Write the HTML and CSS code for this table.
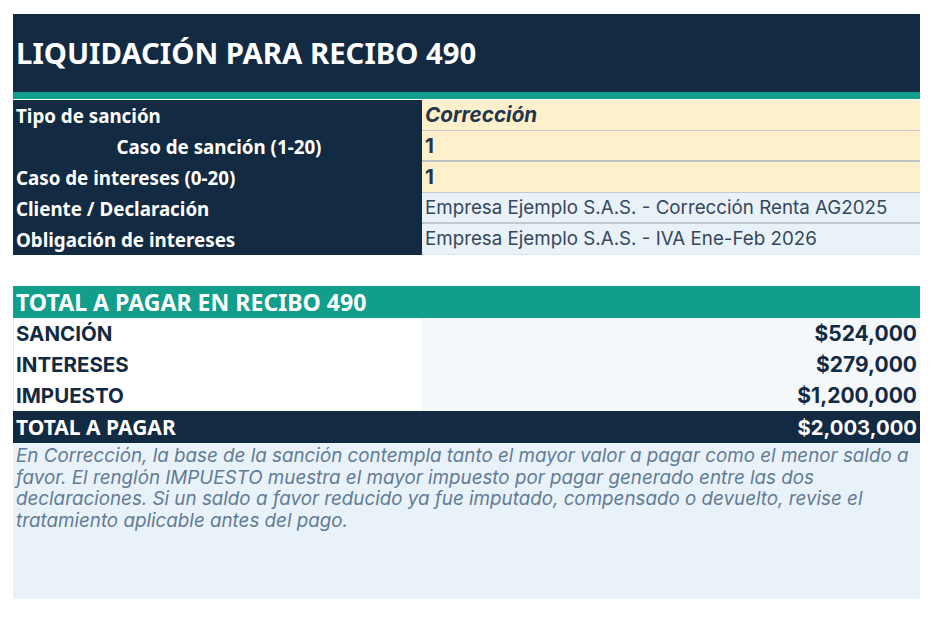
FILE: index.html
```html
<!DOCTYPE html>
<html lang="es">
<head>
<meta charset="utf-8">
<title>Liquidación para recibo 490</title>
<link rel="stylesheet" href="styles.css">
</head>
<body>
<div class="sheet">
  <header class="title">LIQUIDACIÓN PARA RECIBO 490</header>
  <div class="params">
    <div class="lbl">Tipo de sanción</div>
    <div class="val input italic">Corrección</div>
    <div class="lbl center">Caso de sanción (1-20)</div>
    <div class="val input b2">1</div>
    <div class="lbl">Caso de intereses (0-20)</div>
    <div class="val input">1</div>
    <div class="lbl">Cliente / Declaración</div>
    <div class="val info b2">Empresa Ejemplo S.A.S. - Corrección Renta AG2025</div>
    <div class="lbl">Obligación de intereses</div>
    <div class="val info">Empresa Ejemplo S.A.S. - IVA Ene-Feb 2026</div>
  </div>

  <section class="totals">
    <div class="sec-head">TOTAL A PAGAR EN RECIBO 490</div>
    <div class="trow"><div class="tl">SANCIÓN</div><div class="tv">$524,000</div></div>
    <div class="trow"><div class="tl">INTERESES</div><div class="tv">$279,000</div></div>
    <div class="trow"><div class="tl">IMPUESTO</div><div class="tv">$1,200,000</div></div>
    <div class="grand"><div class="gl">TOTAL A PAGAR</div><div class="gv">$2,003,000</div></div>
    <p class="note">En Corrección, la base de la sanción contempla tanto el mayor valor a pagar como el menor saldo a favor. El renglón IMPUESTO muestra el mayor impuesto por pagar generado entre las dos declaraciones. Si un saldo a favor reducido ya fue imputado, compensado o devuelto, revise el tratamiento aplicable antes del pago.</p>
  </section>
</div>
</body>
</html>
```

FILE: styles.css
```css
* { box-sizing: border-box; }
html, body { margin: 0; padding: 0; background: #ffffff; }
body { font-family: "Inter", "Liberation Sans", sans-serif; }

.sheet {
  width: 907px;
  margin: 14px 0 0 13px;
}

.title {
  height: 85px;
  background: #132a43;
  border-bottom: 7px solid #119e8a;
  color: #ffffff;
  font-family: "Noto Sans", "Open Sans", sans-serif;
  font-weight: 700;
  font-size: 29.3px;
  line-height: 78px;
  padding-left: 3px;
}

.params {
  display: grid;
  grid-template-columns: 409px 498px;
  margin-top: 1px;
}

.lbl {
  background: #132a43;
  color: #ffffff;
  font-family: "Noto Sans", "Open Sans", sans-serif;
  font-weight: 700;
  font-size: 18.75px;
  height: 31px;
  line-height: 31px;
  padding-left: 3px;
}
.lbl.center { text-align: center; }

.val {
  height: 31px;
  line-height: 30px;
  padding-left: 3px;
  color: #24364d;
  border-bottom: 1px solid #c3ccd6;
}
.val.b2 { border-bottom: 2px solid #bfc3c7; }
.input {
  background: #fff0cc;
  font-weight: 700;
  font-size: 20.7px;
}
.input.italic { font-style: italic; }
.info {
  background: #e9f2f9;
  font-size: 18.75px;
  color: #36475b;
}
.info.b2 { border-bottom: 2px solid #c5c9cd; }
.params .info:last-child { border-bottom: 1px solid #dde6ee; }

.totals { margin-top: 31px; }

.sec-head {
  height: 32px;
  background: #119e8a;
  color: #ffffff;
  font-family: "Noto Sans", "Open Sans", sans-serif;
  font-weight: 700;
  font-size: 23.1px;
  line-height: 33px;
  padding-left: 3px;
}

.trow {
  display: grid;
  grid-template-columns: 409px 498px;
  height: 31px;
}
.tl {
  background: #ffffff;
  border-left: 1px solid #dbe6ef;
  color: #132a43;
  font-weight: 700;
  font-size: 20.5px;
  line-height: 31px;
  padding-left: 2px;
}
.tv {
  background: #f4f8fb;
  color: #132a43;
  font-weight: 700;
  font-size: 21px;
  line-height: 31px;
  text-align: right;
  padding-right: 3px;
}

.grand {
  display: flex;
  justify-content: space-between;
  background: #132a43;
  color: #ffffff;
  height: 32px;
  line-height: 33px;
  font-weight: 700;
  padding: 0 3px;
}
.gl {
  font-family: "Noto Sans", "Open Sans", sans-serif;
  font-size: 21px;
}
.gv {
  font-family: "Inter", sans-serif;
  font-size: 20.3px;
}

.note {
  margin: 0;
  height: 156px;
  background: #e9f2f9;
  color: #627b95;
  font-style: italic;
  font-size: 18.8px;
  line-height: 21.7px;
  padding: 2px 3px 0 3px;
}
```
